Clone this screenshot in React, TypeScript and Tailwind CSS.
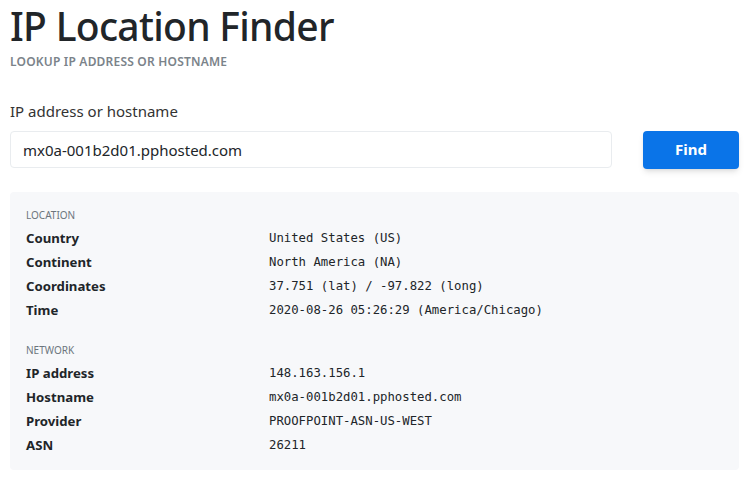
import React from 'react';

type Row = { label: string; value: string };

const location: Row[] = [
  { label: 'Country', value: 'United States (US)' },
  { label: 'Continent', value: 'North America (NA)' },
  { label: 'Coordinates', value: '37.751 (lat) / -97.822 (long)' },
  { label: 'Time', value: '2020-08-26 05:26:29 (America/Chicago)' },
];

const network: Row[] = [
  { label: 'IP address', value: '148.163.156.1' },
  { label: 'Hostname', value: 'mx0a-001b2d01.pphosted.com' },
  { label: 'Provider', value: 'PROOFPOINT-ASN-US-WEST' },
  { label: 'ASN', value: '26211' },
];

function Section({ title, rows }: { title: string; rows: Row[] }) {
  return (
    <div>
      <div className="text-[10px] leading-[14px] uppercase text-[#6c757d] mb-[5px]">{title}</div>
      {rows.map((r) => (
        <div key={r.label} className="grid grid-cols-[243px_1fr] h-6 items-center">
          <div className="text-[13.2px] font-bold text-[#212529]">{r.label}</div>
          <div className="text-[12.3px] text-[#212529] font-['DejaVu_Sans_Mono',monospace]">{r.value}</div>
        </div>
      ))}
    </div>
  );
}

export default function App() {
  return (
    <div className="min-h-screen bg-white pl-[10px] pr-[14px] font-['Noto_Sans',sans-serif] text-[#212529]">
      {/* Header */}
      <h1 className="text-[39px] leading-[52px] font-medium text-[#212529] tracking-[-0.7px]">IP Location Finder</h1>
      <div className="mt-[1px] text-[12px] font-semibold uppercase text-[#7b838a] tracking-[0.2px]">Lookup IP address or hostname</div>

      {/* Search form */}
      <div className="mt-[29px] text-[15px] text-[#333]">IP address or hostname</div>
      <div className="mt-[8px] flex items-center gap-[31px]">
        <input
          className="flex-1 h-[37px] border border-[#e9ecef] rounded-[4px] px-[12px] text-[15px] text-[#212529] outline-none"
          defaultValue="mx0a-001b2d01.pphosted.com"
        />
        <button className="w-[96px] h-[38px] rounded-[4px] bg-[#0a74e8] text-white text-[15px] font-bold shadow-md">
          Find
        </button>
      </div>

      {/* Results */}
      <div className="mt-[23px] bg-[#f7f8fa] rounded-[4px] px-[16px] pt-[16px] pb-[12px] flex flex-col gap-[20px]">
        <Section title="Location" rows={location} />
        <Section title="Network" rows={network} />
      </div>
    </div>
  );
}
